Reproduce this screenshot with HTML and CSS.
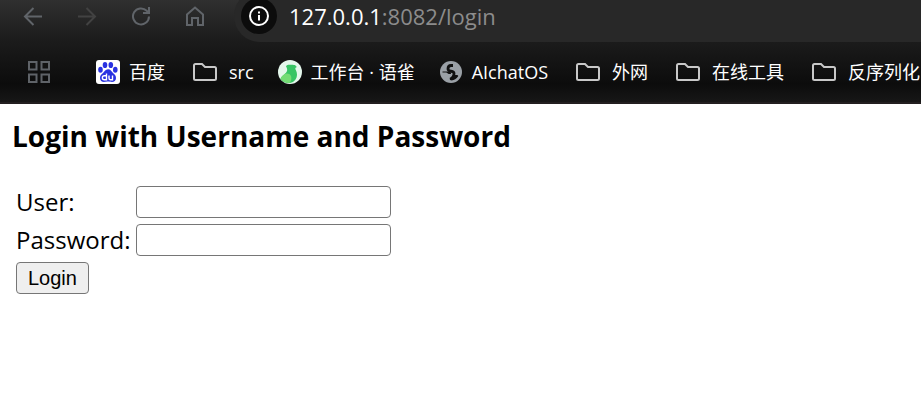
FILE: index.html
```html
<!DOCTYPE html>
<html lang="en">
<head>
    <meta charset="UTF-8">
    <meta name="viewport" content="width=device-width, initial-scale=1.0">
    <title>Login Page</title>
    <link rel="stylesheet" href="styles.css">
</head>
<body>
    <!-- folder icon shared by the bookmarks -->
    <svg class="sprite" aria-hidden="true">
        <symbol id="folder" viewBox="0 0 24 24">
            <path d="M1 5.5Q1 4 2.500 4H9l3 3h9.500Q23 7 23 8.500v10q0 1.500-1.500 1.500h-19Q1 20 1 18.500z" fill="none" stroke="#c8c8c8" stroke-width="2"/>
        </symbol>
    </svg>

    <header class="browser">
        <div class="toolbar">
            <button class="tool" type="button" aria-label="Back">
                <svg viewBox="0 0 20 20"><path d="M19 10.500H2M10.500 2L2 10.500l8.500 8.500"/></svg>
            </button>
            <button class="tool" type="button" aria-label="Forward" disabled>
                <svg viewBox="0 0 20 20"><path d="M1 10.500h17M9.500 2l8.500 8.500L9.500 19"/></svg>
            </button>
            <button class="tool" type="button" aria-label="Reload">
                <svg viewBox="0 0 20 20"><path d="M18 10.500a8 8 0 1 1-2.300-5.700L18 7M18 1v6h-6"/></svg>
            </button>
            <button class="tool" type="button" aria-label="Home">
                <svg viewBox="0 0 20 20"><path d="M2 19V8.500l8-7 8 7V19h-5v-7H7v7z"/></svg>
            </button>
            <div class="address">
                <button class="info" type="button" aria-label="Site information">
                    <svg viewBox="0 0 20 20"><circle cx="10" cy="10" r="9"/><path d="M10 9v5.500M10 5.500v2"/></svg>
                </button>
                <a class="url" href="#"><span class="host">127.0.0.1</span>:8082/login</a>
            </div>
        </div>

        <nav class="bookmarks">
            <button class="apps" type="button" aria-label="Apps">
                <svg viewBox="0 0 22 22"><path d="M1 1h7.500v7.500H1zM13.500 1H21v7.500h-7.500zM1 13.500h7.500V21H1zM13.500 13.500H21V21h-7.500z"/></svg>
            </button>
            <a class="bookmark" href="#">
                <svg viewBox="0 0 24 24">
                    <rect width="24" height="24" rx="3" fill="#fff"/>
                    <g fill="#2932e1">
                        <ellipse cx="4.500" cy="9.800" rx="2.300" ry="3"/>
                        <ellipse cx="9" cy="5" rx="2.300" ry="3.100"/>
                        <ellipse cx="14.800" cy="5" rx="2.300" ry="3.100"/>
                        <ellipse cx="19.300" cy="9.800" rx="2.300" ry="3"/>
                        <path d="M12 9.300c2.500 0 3.500 2.200 5 3.700 1.500 1.400 3 2.400 3 5 0 2.700-1.800 4-4 4-1.700 0-2.500-.4-4-.4s-2.300.4-4 .4c-2.200 0-4-1.300-4-4 0-2.600 1.500-3.600 3-5s2.500-3.700 5-3.700z"/>
                    </g>
                    <path d="M10.500 13.500v6.200H8.300a1.900 1.900 0 0 1 0-3.900h2.200M13 15.500v2.700a1.500 1.500 0 0 0 1.500 1.500h2v-4.200" fill="none" stroke="#fff" stroke-width="1.400"/>
                </svg>
                百度
            </a>
            <a class="bookmark folder" href="#"><svg><use href="#folder"/></svg>src</a>
            <a class="bookmark" href="#">
                <svg viewBox="0 0 24 24">
                    <circle cx="12" cy="12" r="12" fill="#e4f7eb"/>
                    <path d="M8 6.500C8.500 5 10 4.800 11.500 4.800c2 0 4.500-.3 6 .7l1.300 1.500-1.500 1c-.3 1.500 1.700 3 1.700 6.500 0 4-2.500 7.800-7 8.500-4 .3-7.500-1-9.500-4.200 1.500-3.500 5.500-4.800 6.500-7.800.5-1.800 0-3-1-4.500z" fill="#37c564"/>
                    <path d="M2.500 18.800C4 15.500 6.500 13.500 9 13.500c3.300 0 4.800 2.800 4.300 5.500-.2 1.800-.8 3.200-1.800 4-3.500.3-7-1.300-9-4.200z" fill="#74dc74"/>
                </svg>
                工作台 · 语雀
            </a>
            <a class="bookmark" href="#">
                <svg viewBox="0 0 24 24">
                    <circle cx="12" cy="12" r="11" fill="#9aa0a6"/>
                    <path d="M14 5.500h-2c-2.500 0-3 1.500-3 3.500 0 3.500 6 1 6 4.500 0 3-1.500 5-4 5.500" fill="none" stroke="#101010" stroke-width="2.800"/>
                    <path d="M3.500 11.500h6c2 0 2.500 1.300 2.500 2.500h-2c-1.500 0-1.500-1.500-3-1.500H3.500zM14 15h4c1 0 1.500.8 1 1.500-1.500 2.200-3.800 3.700-6.500 4l-2-1.500z" fill="#101010"/>
                </svg>
                AIchatOS
            </a>
            <a class="bookmark folder" href="#"><svg><use href="#folder"/></svg>外网</a>
            <a class="bookmark folder" href="#"><svg><use href="#folder"/></svg>在线工具</a>
            <a class="bookmark folder" href="#"><svg><use href="#folder"/></svg>反序列化</a>
        </nav>
    </header>

    <main class="page">
        <h3>Login with Username and Password</h3>
        <form name="f" action="#" method="POST">
            <table>
                <tbody>
                    <tr>
                        <td><label for="username">User:</label></td>
                        <td><input type="text" id="username" name="username"></td>
                    </tr>
                    <tr>
                        <td><label for="password">Password:</label></td>
                        <td><input type="password" id="password" name="password"></td>
                    </tr>
                    <tr>
                        <td colspan="2"><button class="login" type="submit">Login</button></td>
                    </tr>
                </tbody>
            </table>
        </form>
    </main>
</body>
</html>
```

FILE: styles.css
```css
body {
    margin: 0;
    background-color: white;
    color: black;
    font-family: "Open Sans", "Noto Sans CJK SC", sans-serif;
}
button {
    cursor: pointer;
}
svg {
    display: block;
    flex: none;
}
.sprite {
    position: absolute;
    width: 0;
    height: 0;
}

/* browser bar */
.browser {
    overflow: hidden;
    background: linear-gradient(#303030, #1b1b1b 42px, #0c0c0c 84px, #171717 102px);
    border-bottom: 2px solid #231f20;
}
.toolbar {
    display: flex;
    align-items: center;
    height: 52px;
    margin-top: -10px;
    padding-left: 23px;
    gap: 34px;
}
.tool, .info, .apps {
    flex: none;
    padding: 0;
    border: none;
    background: none;
}
.tool svg {
    width: 20px;
    height: 20px;
    fill: none;
    stroke: #606469;
    stroke-width: 2;
}
.tool:disabled svg {
    stroke: #424242;
}
.address {
    display: flex;
    flex: 1;
    align-items: center;
    height: 52px;
    margin-left: -5px;
    padding-left: 7px;
    gap: 12px;
    border-radius: 26px 0 0 26px;
    background-color: #282828;
}
.info {
    padding: 8px;
    border-radius: 50%;
    background-color: #0c0c0c;
}
.info svg {
    width: 20px;
    height: 20px;
    fill: none;
    stroke: white;
    stroke-width: 2;
}
.url {
    color: #8c8c8c;
    font-size: 22px;
    line-height: 30px;
    text-decoration: none;
}
.host {
    color: white;
}
.bookmarks {
    display: flex;
    align-items: center;
    height: 60px;
    padding-left: 28px;
    gap: 24px;
}
.apps {
    margin-right: 22px;
}
.apps svg {
    width: 22px;
    height: 22px;
    fill: none;
    stroke: #5f6368;
    stroke-width: 2;
}
.bookmark {
    display: flex;
    flex: none;
    align-items: center;
    gap: 9px;
    color: white;
    font-size: 18px;
    line-height: 24px;
    white-space: nowrap;
    text-decoration: none;
}
.bookmark svg {
    width: 24px;
    height: 24px;
}
.folder {
    gap: 12px;
    margin-left: 4px;
}

/* login form */
.page {
    padding: 12px;
}
h3 {
    margin: 0 0 26px;
    font-size: 28px;
    line-height: 40px;
}
table {
    border-spacing: 2px;
    font-size: 24px;
    line-height: 32px;
}
td {
    padding: 2px;
}
input {
    display: block;
    box-sizing: border-box;
    width: 255px;
    height: 32px;
    padding: 2px 4px;
    border: 1px solid #767676;
    border-radius: 4px;
    font-size: 20px;
}
.login {
    display: block;
    height: 32px;
    padding: 0 11px;
    border: 1px solid #767676;
    border-radius: 4px;
    background-color: #efefef;
    color: black;
    font-family: "Liberation Sans", Arial, sans-serif;
    font-size: 20px;
}
```
